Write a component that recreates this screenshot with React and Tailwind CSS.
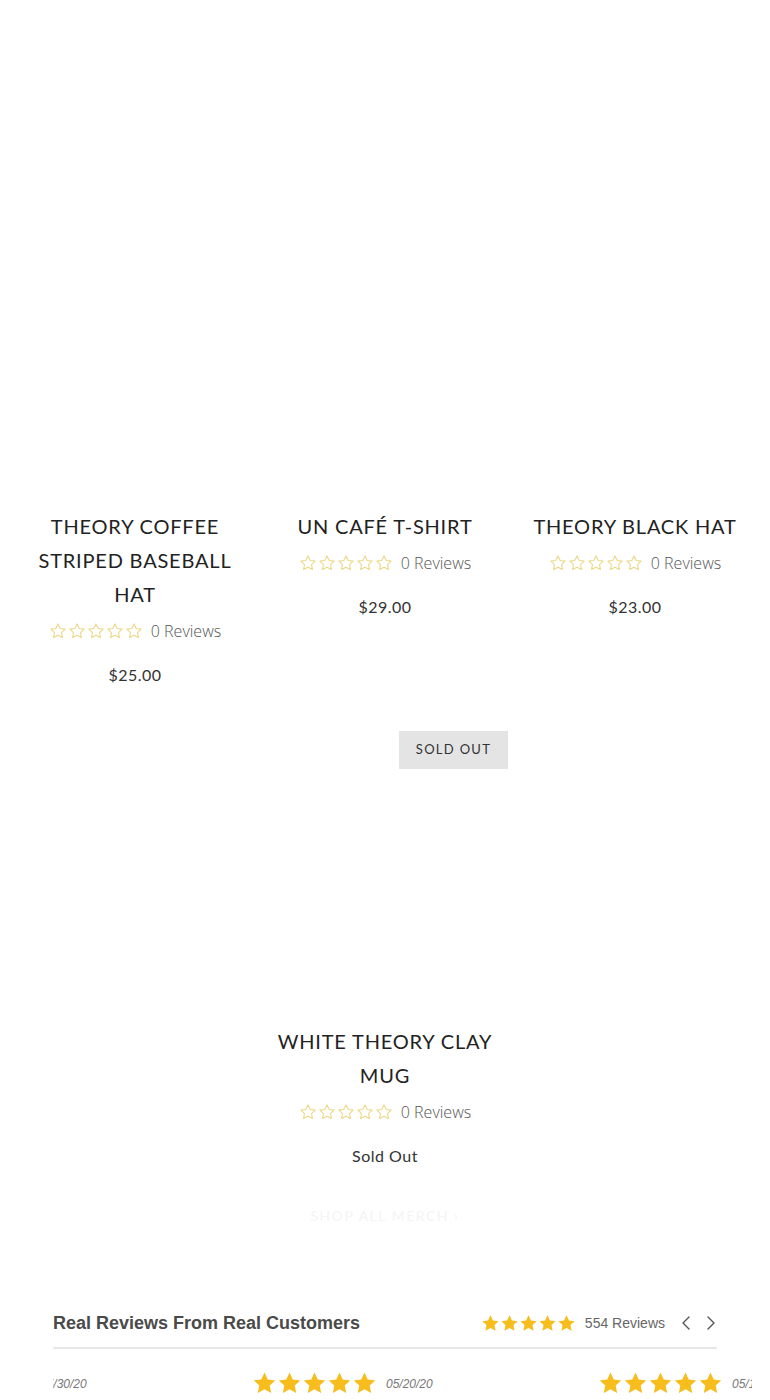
import React from "react";
import { ChevronLeft, ChevronRight } from "lucide-react";

const STAR = "M12 2.5l2.94 6.1 6.56.92-4.78 4.6 1.17 6.58L12 17.56 6.11 20.7l1.17-6.58L2.5 9.52l6.56-.92L12 2.5z";

const OutlineStars = () => (
  <div className="flex items-center gap-[1px]">
    {[0, 1, 2, 3, 4].map((i) => (
      <svg key={i} viewBox="0 0 24 24" className="w-[18px] h-[18px]">
        <path d={STAR} fill="none" stroke="#ecd786" strokeWidth="1.4" strokeLinejoin="round" />
      </svg>
    ))}
  </div>
);

const FilledStars = ({ size }) => (
  <div className="flex items-center">
    {[0, 1, 2, 3, 4].map((i) => (
      <svg key={i} viewBox="0 0 24 24" className={size}>
        <path d="M12 1.5l3.1 6.6 7.2.9-5.3 5 1.4 7.1L12 17.6l-6.4 3.5L7 14l-5.3-5 7.2-.9L12 1.5z" fill="#f7bd1c" />
      </svg>
    ))}
  </div>
);

const products = [
  { title: "THEORY COFFEE STRIPED BASEBALL HAT", price: "$25.00" },
  { title: "UN CAFÉ T-SHIRT", price: "$29.00" },
  { title: "THEORY BLACK HAT", price: "$23.00" },
  { title: "WHITE THEORY CLAY MUG", price: "Sold Out", soldOut: true },
];

const ProductCard = ({ product, imageHeight }) => (
  <div className="w-1/3 pb-[20px]">
    <div className={`relative ${imageHeight}`}>
      {product.soldOut && (
        <div className="absolute top-[24px] right-[2px] w-[109px] h-[38px] bg-[#e4e4e4] flex items-center justify-center text-[13px] tracking-[1.3px] text-[#333]">
          SOLD OUT
        </div>
      )}
    </div>
    <div className="px-[10px] text-center">
      <h3 className="text-[20px] leading-[34px] tracking-[0.8px] text-[#222]">{product.title}</h3>
      <div className="mt-[10px] h-[20px] flex items-center justify-center gap-[8px]">
        <OutlineStars />
        <span className="font-['Open_Sans',sans-serif] font-light text-[16px] text-[#555]">0 Reviews</span>
      </div>
      <p className="mt-[22px] text-[16px] leading-[24px] tracking-[0.5px] text-[#333]">{product.price}</p>
    </div>
  </div>
);

const slides = ["05/30/20", "05/20/20", "05/18/20"];

export default function App() {
  return (
    <div className="bg-white min-h-[1400px] overflow-hidden font-['Lato',sans-serif]">
      {/* Product grid */}
      <section className="px-[10px] flex flex-wrap justify-center">
        {products.slice(0, 3).map((p) => (
          <ProductCard key={p.title} product={p} imageHeight="h-[509px]" />
        ))}
        <ProductCard product={products[3]} imageHeight="h-[317px]" />
      </section>

      <div className="mt-[18px] text-center text-[14px] leading-[20px] tracking-[1.5px] text-[#f4f4f4]">
        SHOP ALL MERCH ›
      </div>

      {/* Reviews */}
      <section className="mx-[53px] mt-[85px] font-['Liberation_Sans',Arial,sans-serif]">
        <div className="flex items-center justify-between h-[24px]">
          <h2 className="text-[18px] font-bold text-[#4a4a4a]">Real Reviews From Real Customers</h2>
          <div className="flex items-center -mr-[6px]">
            <FilledStars size="w-[19px] h-[19px]" />
            <span className="ml-[9px] text-[14px] text-[#666]">554 Reviews</span>
            <ChevronLeft className="ml-[9px] w-[24px] h-[24px] text-[#555]" strokeWidth={1.4} />
            <ChevronRight className="ml-[1px] w-[24px] h-[24px] text-[#555]" strokeWidth={1.4} />
          </div>
        </div>
        <div className="mt-[12px] h-[2px] bg-[#e6e6e6] rounded-full" />
        <div className="mt-[22px] -mr-[35px] overflow-hidden">
          <div className="flex -ml-[147px]">
            {slides.map((d, i) => (
              <div key={i} className="w-[346px] shrink-0 flex items-center">
                <FilledStars size="w-[25px] h-[25px]" />
                <span className="ml-[9px] text-[12px] italic text-[#777]">{d}</span>
              </div>
            ))}
          </div>
        </div>
      </section>
    </div>
  );
}
